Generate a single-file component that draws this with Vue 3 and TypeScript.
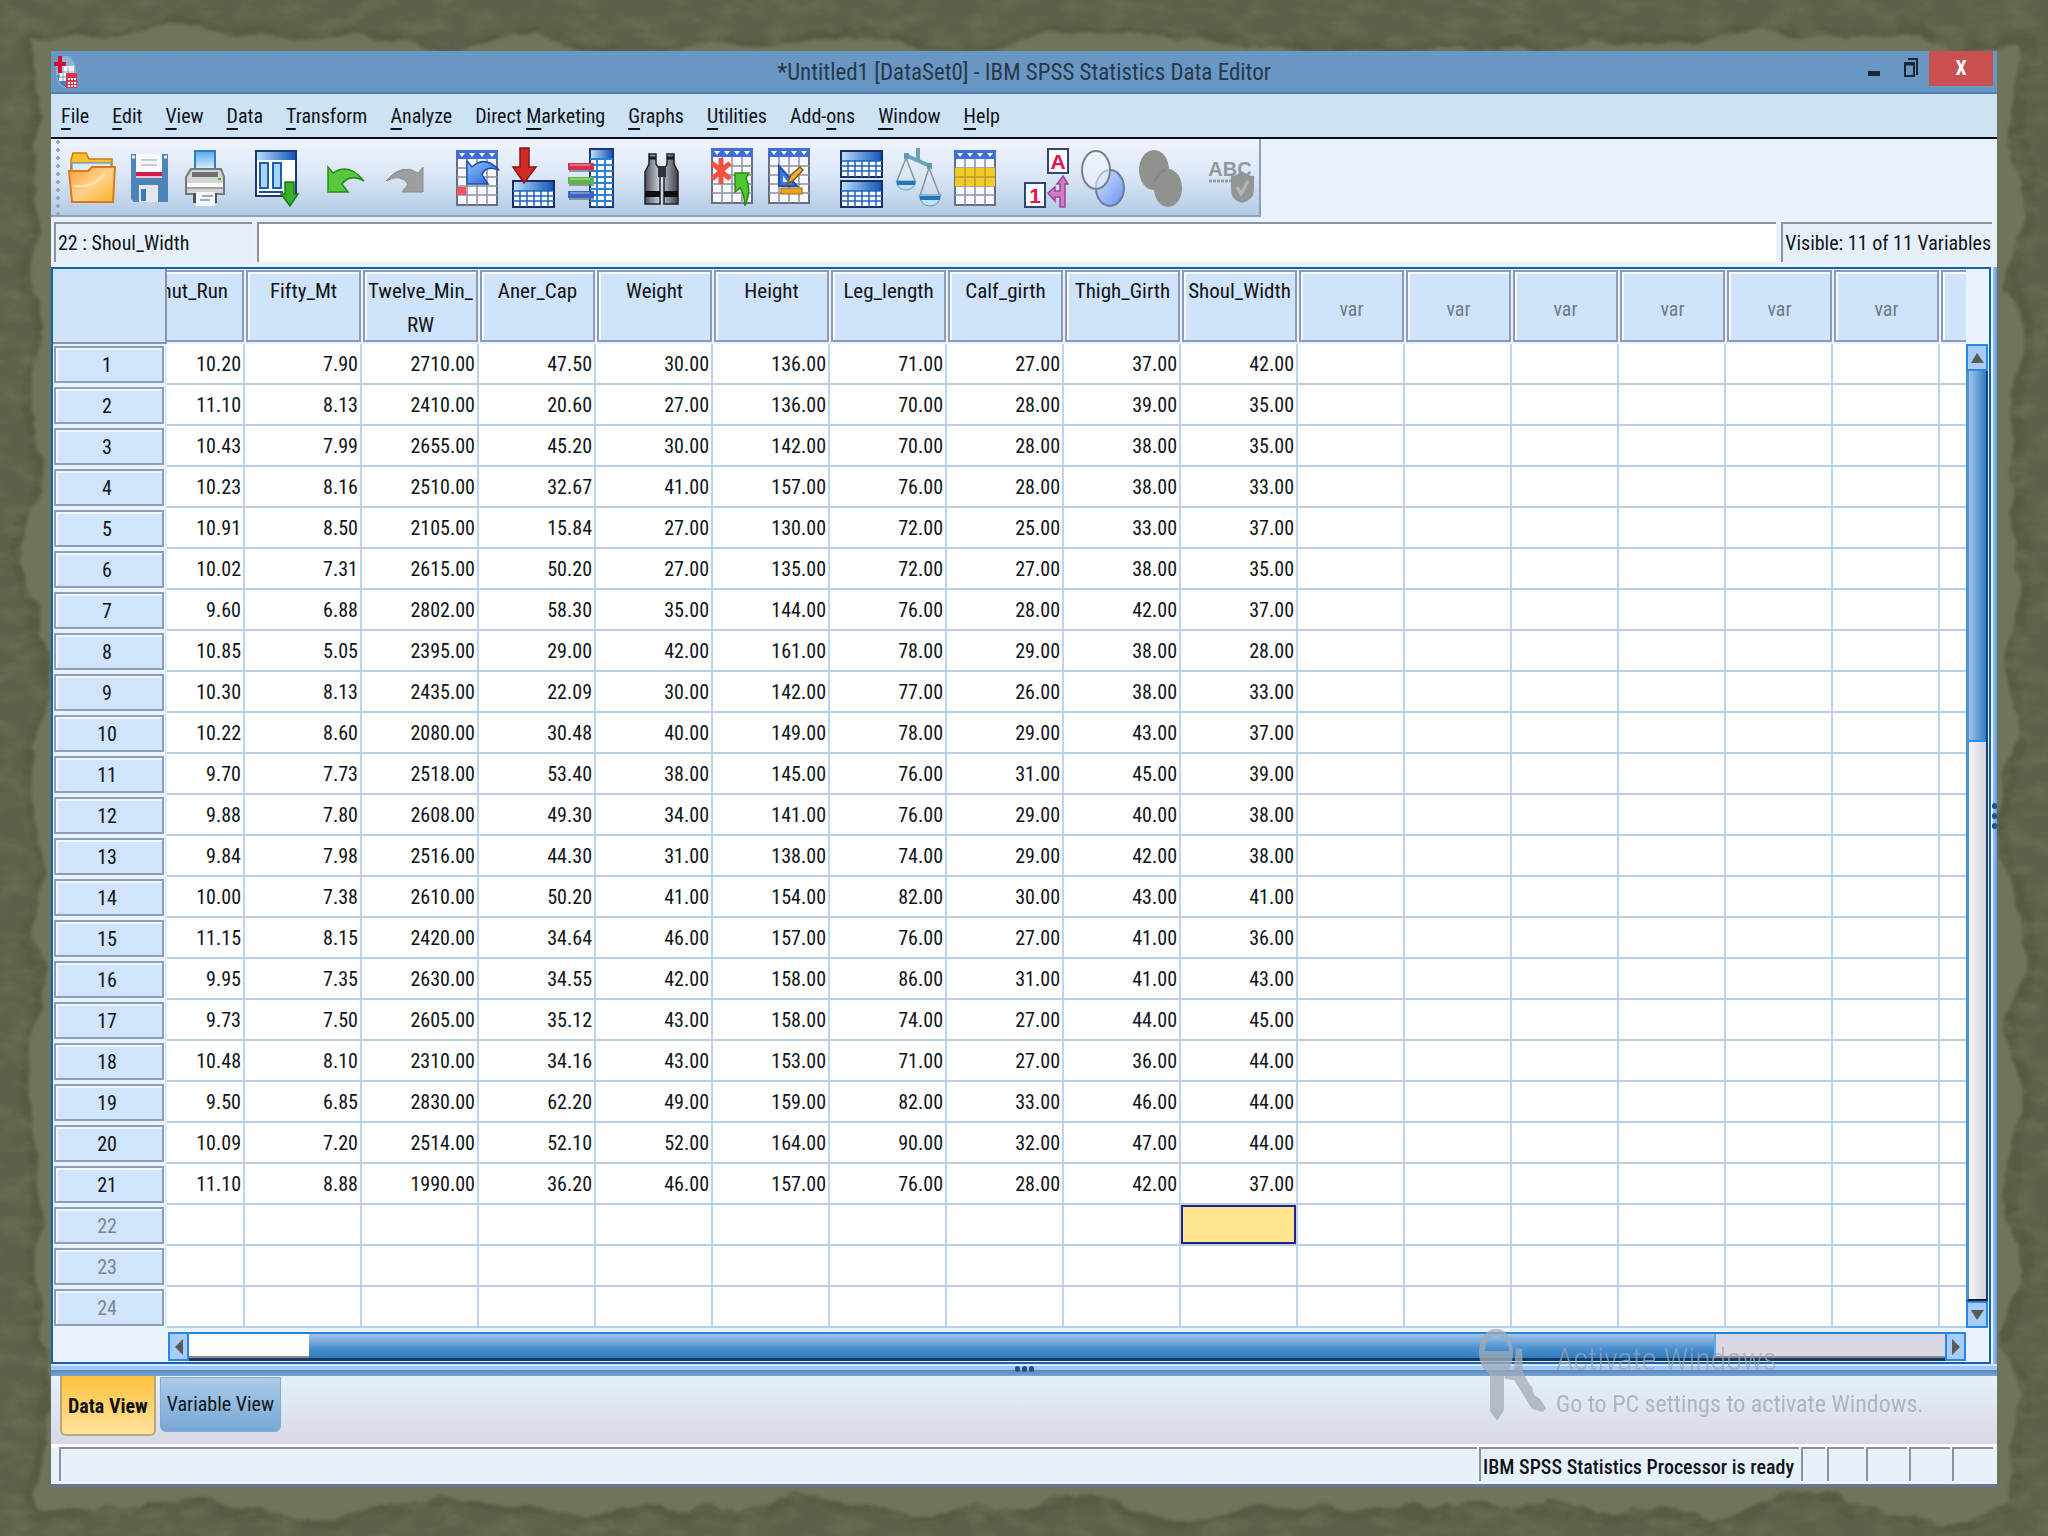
<script setup lang="ts">
import { computed, ref } from 'vue'

interface MenuItem { before: string; key: string; after: string }

const menus: MenuItem[] = [
  { before: '', key: 'F', after: 'ile' },
  { before: '', key: 'E', after: 'dit' },
  { before: '', key: 'V', after: 'iew' },
  { before: '', key: 'D', after: 'ata' },
  { before: '', key: 'T', after: 'ransform' },
  { before: '', key: 'A', after: 'nalyze' },
  { before: 'Direct ', key: 'M', after: 'arketing' },
  { before: '', key: 'G', after: 'raphs' },
  { before: '', key: 'U', after: 'tilities' },
  { before: 'Add-', key: 'o', after: 'ns' },
  { before: '', key: 'W', after: 'indow' },
  { before: '', key: 'H', after: 'elp' }
]

const columns: string[] = [
  'Shut_Run', 'Fifty_Mt', 'Twelve_Min_ RW', 'Aner_Cap', 'Weight',
  'Height', 'Leg_length', 'Calf_girth', 'Thigh_Girth', 'Shoul_Width'
]
const spare = 6
const totalRows = 24

const cases: string[][] = [
  '10.20 7.90 2710.00 47.50 30.00 136.00 71.00 27.00 37.00 42.00',
  '11.10 8.13 2410.00 20.60 27.00 136.00 70.00 28.00 39.00 35.00',
  '10.43 7.99 2655.00 45.20 30.00 142.00 70.00 28.00 38.00 35.00',
  '10.23 8.16 2510.00 32.67 41.00 157.00 76.00 28.00 38.00 33.00',
  '10.91 8.50 2105.00 15.84 27.00 130.00 72.00 25.00 33.00 37.00',
  '10.02 7.31 2615.00 50.20 27.00 135.00 72.00 27.00 38.00 35.00',
  '9.60 6.88 2802.00 58.30 35.00 144.00 76.00 28.00 42.00 37.00',
  '10.85 5.05 2395.00 29.00 42.00 161.00 78.00 29.00 38.00 28.00',
  '10.30 8.13 2435.00 22.09 30.00 142.00 77.00 26.00 38.00 33.00',
  '10.22 8.60 2080.00 30.48 40.00 149.00 78.00 29.00 43.00 37.00',
  '9.70 7.73 2518.00 53.40 38.00 145.00 76.00 31.00 45.00 39.00',
  '9.88 7.80 2608.00 49.30 34.00 141.00 76.00 29.00 40.00 38.00',
  '9.84 7.98 2516.00 44.30 31.00 138.00 74.00 29.00 42.00 38.00',
  '10.00 7.38 2610.00 50.20 41.00 154.00 82.00 30.00 43.00 41.00',
  '11.15 8.15 2420.00 34.64 46.00 157.00 76.00 27.00 41.00 36.00',
  '9.95 7.35 2630.00 34.55 42.00 158.00 86.00 31.00 41.00 43.00',
  '9.73 7.50 2605.00 35.12 43.00 158.00 74.00 27.00 44.00 45.00',
  '10.48 8.10 2310.00 34.16 43.00 153.00 71.00 27.00 36.00 44.00',
  '9.50 6.85 2830.00 62.20 49.00 159.00 82.00 33.00 46.00 44.00',
  '10.09 7.20 2514.00 52.10 52.00 164.00 90.00 32.00 47.00 44.00',
  '11.10 8.88 1990.00 36.20 46.00 157.00 76.00 28.00 42.00 37.00'
].map((line) => line.split(' '))

const selected = ref({ row: 22, col: 9 })
const cellName = computed(() => `${selected.value.row} : ${columns[selected.value.col]}`)
const cellValue = ref('')
const view = ref<'data' | 'variable'>('data')

function select(row: number, col: number) {
  selected.value = { row, col }
}
</script>

<template>
  <main class="desktop">
    <svg class="backdrop" viewBox="0 0 2048 1536" preserveAspectRatio="none" aria-hidden="true">
      <defs>
        <filter id="torn" x="-5%" y="-5%" width="110%" height="110%">
          <feTurbulence type="fractalNoise" baseFrequency="0.008" numOctaves="5" seed="8" />
          <feDisplacementMap in="SourceGraphic" scale="60" xChannelSelector="R" yChannelSelector="G" />
          <feGaussianBlur stdDeviation="1.5" />
        </filter>
        <filter id="grain" x="0" y="0" width="100%" height="100%">
          <feTurbulence type="fractalNoise" baseFrequency="0.03 0.06" numOctaves="5" seed="3" />
          <feColorMatrix values="0 0 0 0 0.16  0 0 0 0 0.18  0 0 0 0 0.10  1.3 0 0 0 -0.52" />
        </filter>
      </defs>
      <rect width="2048" height="1536" fill="#5b614a" />
      <g filter="url(#torn)">
        <rect x="28" y="30" width="1996" height="1484" fill="#444b34" opacity="0.3" />
        <rect x="38" y="38" width="1974" height="1466" fill="#6d745c" />
      </g>
      <rect width="2048" height="1536" filter="url(#grain)" />
    </svg>

    <section class="window">
      <header class="titlebar">
        <svg class="app-icon" viewBox="0 0 24 34" aria-hidden="true">
          <ellipse cx="12" cy="17" rx="10" ry="16" fill="#8eb2da" />
          <path d="M3 20Q5 31 13 33Q22 30 22 20z" fill="#4d7db8" />
          <path d="M7 11h13v15H5z" fill="#fff" />
          <path d="M5 17h15M5 22h15M9 12v14M14 12v14" stroke="#7b9cc6" />
          <path d="M6 1v17M0 9h12" stroke="#d00f31" stroke-width="4" />
          <rect x="12" y="18" width="11" height="15" fill="#dd3550" />
          <path d="M14 24h2m1 0h2m1 0h2M14 28h2m1 0h2m1 0h2M14 31h2m1 0h2m1 0h2" stroke="#fff" stroke-width="2" />
        </svg>
        <h1>*Untitled1 [DataSet0] - IBM SPSS Statistics Data Editor</h1>
        <div class="caption">
          <button class="cap" aria-label="Minimize"><svg width="12" height="35"><rect y="20" width="12" height="5" fill="#1d2630" /></svg></button>
          <button class="cap" aria-label="Restore">
            <svg width="14" height="35" fill="none" stroke="#1d2630">
              <path d="M4 8h9v16" stroke-width="2" /><rect x="1" y="12" width="9" height="13" stroke-width="2" /><path d="M0 13h11" stroke-width="3" />
            </svg>
          </button>
          <button class="cap close" aria-label="Close">X</button>
        </div>
      </header>

      <nav class="menubar" aria-label="Main menu">
        <button v-for="m in menus" :key="m.before + m.key + m.after">{{ m.before }}<u>{{ m.key }}</u>{{ m.after }}</button>
      </nav>

      <div class="toolrow">
        <svg class="shared" width="0" height="0" aria-hidden="true">
          <defs>
            <linearGradient id="blueBar"><stop offset="0" stop-color="#b9dcf8" /><stop offset="1" stop-color="#1357b8" /></linearGradient>
            <linearGradient id="folder" x1="0" y1="0" x2="1" y2="1"><stop offset="0" stop-color="#ff9f38" /><stop offset="0.5" stop-color="#ffd08a" /><stop offset="1" stop-color="#ffb326" /></linearGradient>
            <linearGradient id="paper" x1="0" y1="0" x2="0" y2="1"><stop offset="0" stop-color="#5ba9ec" /><stop offset="1" stop-color="#e6f5ff" /></linearGradient>
            <linearGradient id="metal"><stop offset="0" stop-color="#4c4f58" /><stop offset="0.45" stop-color="#cfd4de" /><stop offset="1" stop-color="#3b3e46" /></linearGradient>
            <linearGradient id="venn" x1="0" y1="0" x2="1" y2="1"><stop offset="0" stop-color="#dbe8ff" /><stop offset="1" stop-color="#6490ee" /></linearGradient>
            <linearGradient id="arrowBlue" x1="0" y1="0" x2="1" y2="1"><stop offset="0" stop-color="#8fc4ff" /><stop offset="1" stop-color="#1c5bd0" /></linearGradient>
            <symbol id="sheet" viewBox="0 0 42 56">
              <rect x="1" y="1" width="40" height="54" fill="#f6f8fd" stroke="#6a6f80" stroke-width="2" />
              <path d="M1 18h40M1 27h40M1 36h40M1 45h40M11 8v47M21 8v47M31 8v47" stroke="#8d909f" stroke-width="1.5" />
              <rect width="42" height="9" fill="#3f6fd6" />
              <path d="M3 3h6l-3 4zM13 3h6l-3 4zM23 3h6l-3 4zM33 3h6l-3 4z" fill="#fff" />
            </symbol>
            <symbol id="grid" viewBox="0 0 43 28">
              <rect x="1" y="1" width="41" height="26" fill="#fff" stroke="#1a2c63" stroke-width="2" />
              <rect x="2" y="2" width="39" height="9" fill="url(#blueBar)" />
              <path d="M1 11h41M1 16h41M1 21h41M8 11v16M15 11v16M22 11v16M29 11v16M36 11v16" stroke="#1b62c0" stroke-width="1.5" />
            </symbol>
          </defs>
        </svg>
        <div class="toolbar" role="toolbar" aria-label="Data editor">
          <div class="group">
            <button aria-label="Open"><svg viewBox="0 0 57 64">
              <path d="M7 14l2-7h13l3 6h23v12H7z" fill="#ffbe2e" stroke="#d07a12" stroke-width="1.5" />
              <path d="M8 17h39v10H8z" fill="#d8ecfb" stroke="#4381c9" />
              <path d="M5 25h19l4-4h23l-2 35H8z" fill="url(#folder)" stroke="#d9791a" stroke-width="2" />
              <path d="M9 40q24 2 32-14" fill="none" stroke="#ffe7bd" stroke-width="2" />
            </svg></button>
            <button aria-label="Save"><svg viewBox="0 0 57 64">
              <path d="M10 8h37v48H13l-3-3z" fill="#4f84bb" />
              <rect x="15" y="8" width="26" height="19" fill="#f7f9fc" /><path d="M20 14h16M20 19h16" stroke="#b6bcc8" stroke-width="1.5" />
              <rect x="15" y="26" width="26" height="4" fill="#d8174a" /><rect x="15" y="30" width="26" height="2" fill="#f2c4d0" />
              <rect x="18" y="39" width="19" height="17" fill="#e4e7ec" /><rect x="20" y="43" width="5" height="12" fill="#3a78bd" />
              <path d="M11 11h3M43 11h3" stroke="#e8f1fa" stroke-width="3" />
            </svg></button>
            <button aria-label="Print"><svg viewBox="0 0 57 64">
              <path d="M17 5h20v20H17z" fill="url(#paper)" stroke="#2f7bc6" stroke-width="2" />
              <path d="M13 23h30l3 8v17H8V31z" fill="#d4d4d0" stroke="#77787a" stroke-width="2" />
              <path d="M14 26h26v5H14z" fill="#6f7174" /><path d="M9 39h36" stroke="#fafafa" stroke-width="4" /><path d="M9 42h36" stroke="#909294" stroke-width="1.5" />
              <path d="M40 33h3" stroke="#40c020" stroke-width="2" />
              <path d="M15 47v10h24V47z" fill="#4d5258" /><path d="M18 46h19v14H18z" fill="#f3f8fd" /><path d="M24 50h11M22 54h10" stroke="#8a8f98" stroke-width="1.5" />
            </svg></button>
          </div>
          <div class="group">
            <button aria-label="Recall dialog"><svg viewBox="0 0 57 64">
              <rect x="7" y="5" width="40" height="45" fill="#fff" stroke="#1d3a78" stroke-width="2" /><rect x="8" y="6" width="38" height="8" fill="url(#blueBar)" />
              <path d="M11 17h8v25h-8zM24 17h8v25h-8z" fill="#a8d6f7" stroke="#1a5eb5" stroke-width="2" /><path d="M10 46h24" stroke="#1a4fa0" stroke-width="2" />
              <path d="M36 36h9v12h4l-8 12-9-12h4z" fill="#36b228" stroke="#1b7a17" stroke-width="1.5" />
            </svg></button>
          </div>
          <div class="group">
            <button aria-label="Undo"><svg viewBox="0 0 57 64">
              <path d="M8 21l5 6q16-11 31 8-14-8-22 3l6 8H8z" fill="#58c83c" stroke="#2a8a1e" stroke-width="1.5" />
            </svg></button>
            <button aria-label="Redo"><svg viewBox="0 0 57 64">
              <path d="M46 21l-5 6Q25 16 9 35q14-8 22 3l-6 8h21z" fill="#9d9f9f" stroke="#8c8e8e" />
            </svg></button>
          </div>
          <div class="group">
            <button aria-label="Go to case"><svg viewBox="0 0 57 64">
              <use href="#sheet" x="8" y="4" width="42" height="56" /><rect x="9" y="41" width="9" height="8" fill="#f0545f" />
              <path d="M19 15l5 6q13-12 27 3-14-5-17 5l6 9H19z" fill="url(#arrowBlue)" stroke="#1e4fb0" stroke-width="1.5" />
            </svg></button>
            <button aria-label="Go to variable"><svg viewBox="0 0 57 64">
              <use href="#grid" x="7" y="34" width="43" height="28" />
              <path d="M15 2h9v19h7L19 37 8 21h7z" fill="#cf2a20" stroke="#8c1411" stroke-width="1.5" />
            </svg></button>
            <button aria-label="Variables"><svg viewBox="0 0 57 64">
              <rect x="28" y="3" width="23" height="58" fill="#fff" stroke="#1a3a7c" stroke-width="2" /><rect x="29" y="4" width="21" height="8" fill="url(#blueBar)" />
              <path d="M28 13h23M28 19h23M28 25h23M28 31h23M28 37h23M28 43h23M28 49h23M28 55h23M35 12v49M43 12v49" stroke="#2a82d2" stroke-width="2" />
              <rect x="6" y="17" width="26" height="7" fill="#cf3350" /><rect x="6" y="31" width="26" height="7" fill="#5cb63f" /><rect x="6" y="45" width="26" height="7" fill="#3a63c4" />
              <path d="M8 19h20M8 33h20M8 47h20" stroke="#fff" opacity="0.6" />
              <path d="M7 25h25M7 39h25M7 53h25" stroke="#6e7684" opacity="0.7" stroke-width="2" />
            </svg></button>
          </div>
          <div class="group">
            <button aria-label="Find"><svg viewBox="0 0 57 64">
              <path d="M16 8h7v10l4 6v34H12V26l4-8zM34 8h7v10l4 8v32H31V24l3-6z" fill="url(#metal)" stroke="#202228" stroke-width="1.5" />
              <rect x="25" y="20" width="8" height="11" fill="#30333a" /><path d="M12 45h15v6H12zM31 45h14v6H31z" fill="#0d0e10" /><path d="M16 12h7M34 12h7" stroke="#16181c" stroke-width="3" />
            </svg></button>
          </div>
          <div class="group">
            <button aria-label="Insert cases"><svg viewBox="0 0 57 64">
              <use href="#sheet" x="7" y="2" width="42" height="56" />
              <path d="M17 12v26M8 17l18 16M26 17L8 33" stroke="#f2513f" stroke-width="5" />
              <path d="M31 27h14l-3 5q6 12-1 28-1-14-5-18l-5 4z" fill="#51c72f" stroke="#208a18" stroke-width="1.5" />
            </svg></button>
            <button aria-label="Insert variable"><svg viewBox="0 0 57 64">
              <use href="#sheet" x="7" y="2" width="42" height="56" />
              <path d="M18 20v20h18z" fill="#3a78e0" stroke="#1f4fae" stroke-width="2" /><path d="M22 30v6h5z" fill="#dce9fb" />
              <path d="M26 38l4-9 9-8 3 3-9 10z" fill="#f1b233" stroke="#7c5a28" stroke-width="1.5" /><rect x="20" y="42" width="21" height="6" fill="#e9a221" stroke="#9a6a10" />
            </svg></button>
          </div>
          <div class="group">
            <button aria-label="Split file"><svg viewBox="0 0 57 64">
              <use href="#grid" x="8" y="4" width="43" height="28" /><use href="#grid" x="8" y="34" width="43" height="28" />
            </svg></button>
            <button aria-label="Weight cases"><svg viewBox="0 0 57 64">
              <path d="M29 2v14M16 9l25 11" stroke="#6ba4b8" stroke-width="4" /><path d="M15 7h5v6h-5zM38 17h5v6h-5z" fill="#5c9bb2" />
              <path d="M17 12L8 35M17 12l9 23M40 22l-9 28M40 22l11 28" stroke="#8b9298" stroke-width="1.5" fill="none" />
              <path d="M7 35h20q-2 9-10 9T7 35zM30 49h22q-2 11-11 11T30 49z" fill="#bfe2f6" stroke="#5b9cc0" /><path d="M8 37h18M31 52h20" stroke="#2277b8" stroke-width="4" />
            </svg></button>
            <button aria-label="Select cases"><svg viewBox="0 0 57 64">
              <use href="#sheet" x="8" y="4" width="42" height="56" /><rect x="9" y="22" width="40" height="18" fill="#f4cb22" />
              <path d="M9 31h40M19 22v18M29 22v18M39 22v18" stroke="#b79a3a" stroke-width="1.5" />
            </svg></button>
          </div>
          <div class="group">
            <button aria-label="Value labels"><svg viewBox="0 0 57 64">
              <rect x="31" y="3" width="20" height="24" fill="#fafcff" stroke="#30456f" stroke-width="2" /><rect x="8" y="37" width="20" height="24" fill="#fafcff" stroke="#30456f" stroke-width="2" />
              <text x="41" y="23" class="glyph">A</text><text x="18" y="57" class="glyph">1</text>
              <path d="M46 30l5 8h-3v23h-5V51h-5v4l-7-8 7-6v4h5v-7h-3z" fill="#d27bc9" stroke="#9a4794" stroke-width="1.5" />
            </svg></button>
            <button aria-label="Use variable sets"><svg viewBox="0 0 57 64">
              <ellipse cx="36" cy="42" rx="14" ry="18" fill="url(#venn)" stroke="#6f7c94" stroke-width="2" />
              <ellipse cx="22" cy="24" rx="14" ry="19" fill="#f2f6fd" fill-opacity="0.55" stroke="#7c808a" stroke-width="2" />
            </svg></button>
            <button aria-label="Show all variables"><svg viewBox="0 0 57 64">
              <g fill="#8f918d"><ellipse cx="23" cy="24" rx="15" ry="20" /><ellipse cx="37" cy="42" rx="14" ry="19" /></g>
              <path d="M24 36q2-9 11-13" stroke="#858783" fill="none" stroke-width="2" />
            </svg></button>
          </div>
          <div class="group">
            <button aria-label="Spell check"><svg viewBox="0 0 57 64">
              <text x="28" y="30" class="abc">ABC</text><path d="M7 35h24" stroke="#9a9fa5" stroke-width="3" stroke-dasharray="3 1" />
              <path d="M40 25q6 5 12 5v14q0 10-12 13-11-3-11-13V30q6 0 11-5z" fill="#929698" /><path d="M35 41l4 7 7-13" fill="none" stroke="#b2b7ba" stroke-width="3" />
            </svg></button>
          </div>
        </div>
      </div>

      <div class="cellbar">
        <label class="cell-name" for="cell-value">{{ cellName }}</label>
        <input id="cell-value" v-model="cellValue" type="text" />
        <span class="visible">Visible: 11 of 11 Variables</span>
      </div>

      <div class="body">
        <div class="sheet">
          <div class="sheet-main">
            <table>
              <colgroup>
                <col class="c-head" /><col class="c-first" />
                <col v-for="n in columns.length - 1" :key="'c' + n" class="c-var" />
                <col v-for="n in spare" :key="'s' + n" class="c-spare" /><col />
              </colgroup>
              <thead>
                <tr>
                  <td class="corner"></td>
                  <th v-for="(c, i) in columns" :key="c" scope="col" :class="{ clipped: i === 0 }"><div class="hd"><span>{{ c }}</span></div></th>
                  <th v-for="n in spare" :key="n" scope="col"><div class="hd spare">var</div></th>
                  <td class="cut"><div class="hd"></div></td>
                </tr>
              </thead>
              <tbody>
                <tr v-for="r in totalRows" :key="r">
                  <th scope="row"><div class="rh" :class="{ dim: r > cases.length }">{{ r }}</div></th>
                  <td
                    v-for="(c, i) in columns" :key="c"
                    :class="{ picked: selected.row === r && selected.col === i }"
                    @click="select(r, i)"
                  >{{ cases[r - 1]?.[i] }}</td>
                  <td v-for="n in spare + 1" :key="n"></td>
                </tr>
              </tbody>
            </table>
            <div class="vscroll">
              <button class="arrow" aria-label="Scroll up"><svg width="13" height="10"><path d="M6 0l7 10H0z" fill="#5a5a55" /></svg></button>
              <div class="track"><div class="thumb"></div></div>
              <button class="arrow" aria-label="Scroll down"><svg width="13" height="10"><path d="M6 10l7-10H0z" fill="#5a5a55" /></svg></button>
            </div>
          </div>
          <div class="hscroll">
            <button class="arrow" aria-label="Scroll left"><svg width="8" height="16"><path d="M0 8l8-8v16z" fill="#5a5a55" /></svg></button>
            <div class="track"><div class="lead"></div><div class="thumb"></div><div class="rest"></div></div>
            <button class="arrow" aria-label="Scroll right"><svg width="8" height="16"><path d="M8 8L0 0v16z" fill="#5a5a55" /></svg></button>
          </div>
        </div>
        <div class="vsplit"><i></i><i></i><i></i></div>
      </div>
      <div class="hsplit"><i></i><i></i><i></i></div>

      <div class="tabs" role="tablist">
        <button role="tab" class="tab" :class="{ on: view === 'data' }" :aria-selected="view === 'data'" @click="view = 'data'">Data View</button>
        <button role="tab" class="tab" :class="{ on: view === 'variable' }" :aria-selected="view === 'variable'" @click="view = 'variable'">Variable View</button>
      </div>

      <footer class="status">
        <span class="slot wide"></span>
        <span class="slot message">IBM SPSS Statistics Processor is ready</span>
        <span class="slot s1"></span><span class="slot s2"></span><span class="slot s3"></span><span class="slot s3"></span><span class="slot s3"></span>
      </footer>

      <aside class="watermark">
        <svg width="68" height="92" viewBox="0 0 68 92" aria-hidden="true">
          <g fill="#a3acb8">
            <path fill-rule="evenodd" d="M17 0C29 0 34 12 34 24c0 11-4 18-9 21v36l-7 11-7-10V45C4 41 0 33 0 24 0 12 6 0 17 0zm0 7C9 7 6 14 6 22h24C30 14 26 7 17 7z" />
            <path d="M37 19l6 1 1 23 6 12 3 3 2 8 6 4 6 9-3 4-11-3-18-29-9-1-1-7 10-3z" />
          </g>
        </svg>
        <div><p class="big">Activate Windows</p><p>Go to PC settings to activate Windows.</p></div>
      </aside>
    </section>
  </main>
</template>

<style>
body { background: #5b614a; }
</style>

<style scoped>
* { box-sizing: border-box; }
.desktop {
  position: relative;
  min-height: 100vh;
  padding: 51px 51px 52px;
  font-family: "Roboto Condensed", "Liberation Sans", sans-serif;
  font-size: 20px;
  line-height: 24px;
  color: #101418;
}
.backdrop { position: absolute; inset: 0; width: 100%; height: 100%; }
.shared { position: absolute; }
button { border: 0; padding: 0; background: none; font: inherit; color: inherit; }
svg { display: block; }

.window {
  position: relative;
  display: flex;
  flex-direction: column;
  background: #e8f1fc;
  border-bottom: 3px solid #64779a;
}

.titlebar {
  display: grid;
  grid-template-columns: 1fr auto 1fr;
  height: 43px;
  background: #6997c3;
  border-bottom: 2px solid #4e7fb4;
}
.app-icon { width: 24px; height: 34px; margin: 4px 3px; }
h1 { margin: 0; font-size: 23px; font-weight: 400; line-height: 44px; color: #27384a; }
.caption { display: flex; justify-content: flex-end; padding-right: 4px; }
.cap { display: flex; justify-content: center; width: 37px; height: 35px; }
.close { width: 64px; background: #c94f50; color: #fff; font-size: 20px; line-height: 35px; font-weight: 700; }

.menubar {
  display: flex;
  align-items: center;
  gap: 23px;
  height: 45px;
  padding: 0 10px;
  background: #cde2f5;
  border-bottom: 2px solid #0a0e14;
}
.menubar u { text-decoration-thickness: 2px; text-underline-offset: 5px; }

.toolrow { display: flex; padding-bottom: 4px; }
.toolbar {
  display: flex;
  align-items: center;
  gap: 14px;
  height: 78px;
  padding: 2px 0 0 13px;
  background:
    radial-gradient(circle at 2px 3px, #92a5bd 2px, transparent 2px) 5px 0 / 4px 8px repeat-y,
    linear-gradient(#f0f5fd, #dce8f6 45%, #b3cbe5);
  border-right: 2px solid #8f9fb5;
  border-bottom: 2px solid #8f9fb5;
}
.group { display: flex; }
.group button { width: 57px; height: 64px; }
.glyph { font: 700 21px "Liberation Sans", sans-serif; fill: #e5104e; text-anchor: middle; }
.abc { font: 700 20px "Liberation Sans", sans-serif; fill: #92979d; text-anchor: middle; }

.cellbar {
  display: flex;
  gap: 5px;
  height: 46px;
  padding: 1px 5px 5px 3px;
}
.cell-name, .cellbar input, .visible {
  border: 0;
  border-top: 2px solid #8b93a3;
  border-left: 2px solid #8b93a3;
  background: #e6f0fb;
  line-height: 38px;
}
.cell-name { width: 198px; padding-left: 2px; }
.cellbar input { flex: 1; min-width: 0; background: #fff; font: inherit; outline: 0; }
.visible { padding: 0 1px 0 2px; white-space: nowrap; }

.body { display: flex; }
.sheet {
  flex: 1;
  min-width: 0;
  border: 2px solid #1463b0;
  background: #e8f3fd;
  padding: 0 1px 1px 0;
}
.sheet-main { display: flex; }
table {
  flex: 1;
  width: 100%;
  min-width: 0;
  table-layout: fixed;
  border-collapse: separate;
  border-spacing: 0;
}
.c-head { width: 114px; }
.c-first { width: 78px; }
.c-var { width: 117px; }
.c-spare { width: 107px; }
th, td { padding: 0; font-weight: 400; }
thead th, thead td { height: 75px; vertical-align: top; }
.corner { background: #d0e3f9; border-bottom: 2px solid #8592a8; border-right: 2px solid #8592a8; }
.hd {
  display: flex;
  justify-content: center;
  height: 72px;
  margin: 1px 1px 0 1px;
  padding-top: 2px;
  border: 2px solid #8c9bb8;
  box-shadow: inset 2px 2px #f4f9ff;
  background: #cfe3fa;
  font-size: 21px;
  line-height: 34px;
  text-align: center;
  overflow: hidden;
}
.clipped .hd { margin-left: 0; border-left: 0; justify-content: flex-end; padding-right: 14px; box-shadow: inset 0 2px #f4f9ff; }
.cut .hd { margin-right: 0; border-right: 0; }
.hd.spare { color: #6f7a88; padding-top: 20px; font-size: 20px; }
tbody th, tbody td { height: 41px; }
tbody td {
  background: #fff;
  border-right: 2px solid #bdd5ec;
  border-bottom: 2px solid #b6cee6;
  padding-right: 2px;
  text-align: right;
  white-space: nowrap;
}
tbody td:last-child { border-right: 0; }
tbody th { padding: 1px 1px 2px 1px; border-right: 2px solid #dfeaf6; }
.rh {
  height: 37px;
  border: 2px solid #8d9fb8;
  box-shadow: inset 2px 2px #f0f7ff;
  background: #d0e4fb;
  line-height: 34px;
  padding-right: 4px;
  text-align: center;
}
.rh.dim { color: #7f858c; }
tbody td.picked { background: #ffe58e; box-shadow: inset 0 0 0 2px #23238f; }

.arrow { display: flex; align-items: center; justify-content: center; background: #a6ccf7; border: 2px solid #2a86e2; }
.vscroll { display: flex; flex-direction: column; width: 22px; padding-top: 75px; }
.vscroll .arrow { height: 27px; }
.vscroll .track { flex: 1; background: linear-gradient(90deg, #f7f2f8, #d4d2dc); border-left: 3px solid #4a92d6; border-right: 2px solid #16436f; border-bottom: 2px solid #111a2a; }
.vscroll .thumb { height: 40%; background: linear-gradient(90deg, #9fc4e8, #2f7dc2); border-bottom: 2px solid #2a8df0; }
.hscroll { display: flex; height: 29px; margin: 4px 22px 0 115px; }
.hscroll .arrow { width: 21px; }
.hscroll .track { display: flex; flex: 1; border-top: 2px solid #1f83e0; border-bottom: 3px solid #173a63; }
.hscroll .lead { width: 120px; background: #fff; border-bottom: 2px solid #8c8c90; }
.hscroll .thumb { flex: 1407; background: linear-gradient(#a4c4e6, #4a90cf 60%, #2f79bd); }
.hscroll .rest { flex: 229; background: #dad8e2; border-bottom: 2px solid #8c8c90; border-left: 2px solid #5faaf0; }

.vsplit { display: flex; flex-direction: column; justify-content: center; align-items: center; gap: 4px; width: 6px; background: linear-gradient(90deg, #e6f3ff 2px, #9cc6fa 2px, #5d9be0); }
.vsplit i, .hsplit i { width: 5px; height: 6px; border-radius: 3px; background: #23508f; }
.hsplit {
  display: flex;
  justify-content: center;
  gap: 2px;
  height: 12px;
  padding-top: 2px;
  background: linear-gradient(#d4e7fc 2px, #a2c6f5 2px, #a2c6f5 6px, #5b86b8 6px, #74a5d8);
}

.tabs {
  display: flex;
  align-items: flex-start;
  gap: 4px;
  height: 71px;
  padding-left: 9px;
  background: linear-gradient(#e4f1fb, #dde4f0 50%, #d8d9e4 95%, #fff 96%);
}
.tab {
  height: 55px;
  margin-top: 1px;
  padding: 0 6px 2px;
  border: 1px solid #84aad0;
  border-radius: 0 0 6px 6px;
  background: linear-gradient(#abcbe8, #77a7d6);
}
.tab.on {
  height: 60px;
  margin-top: 0;
  padding: 2px 6px 0;
  border: 2px solid #b8a878;
  border-top: 0;
  background: linear-gradient(#ffc23f, #ffe29c);
  font-weight: 700;
}

.status { display: flex; gap: 2px; height: 37px; padding: 0 4px 3px 8px; }
.slot { border-top: 2px solid #8a93a2; border-left: 2px solid #8a93a2; background: #e6f1fc; line-height: 36px; }
.wide { flex: 1; }
.message { width: 320px; padding-left: 2px; white-space: nowrap; font-weight: 500; }
.s1 { width: 24px; }
.s2 { width: 37px; }
.s3 { width: 41px; }

.watermark {
  position: absolute;
  right: 78px;
  bottom: 63px;
  display: flex;
  gap: 9px;
  width: 440px;
  color: #9ea5ae;
  opacity: 0.75;
  font-size: 24px;
  line-height: 30px;
  pointer-events: none;
}
.watermark svg { flex: none; }
.watermark p { margin: 0; white-space: nowrap; }
.watermark .big { padding: 15px 0; font-size: 32px; font-weight: 300; line-height: 30px; }
</style>
